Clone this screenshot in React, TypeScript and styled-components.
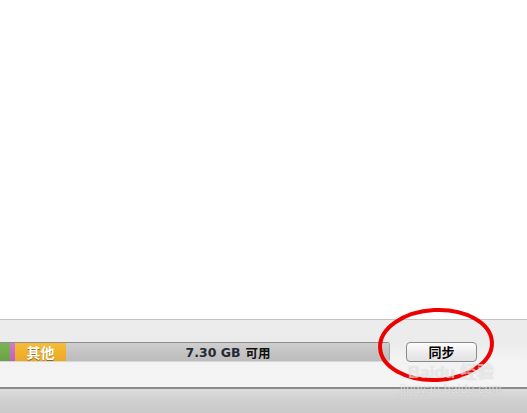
import React from 'react';
import styled, {createGlobalStyle} from 'styled-components';

const GlobalStyle = createGlobalStyle`
  html, body {
    margin: 0;
    padding: 0;
    background: #ffffff;
  }
  #root {
    width: 527px;
    height: 413px;
  }
`;

const segments = [
    {color: 'linear-gradient(#7cb356, #6aa243)', width: 10, label: ''},
    {color: 'linear-gradient(#d27ad0, #bf5fbd)', width: 5, label: ''},
    {color: 'linear-gradient(#f5bd38, #eca823)', width: 51, label: '其他'},
];

const App: React.FC = () => {
    return (
        <Window>
            <GlobalStyle/>
            <Content/>
            <Footer>
                <CapacityBar>
                    {segments.map((s, i) => (
                        <Segment key={i} $bg={s.color} style={{width: s.width}}>
                            {s.label}
                        </Segment>
                    ))}
                    <FreeSpace>
                        <FreeNumber>7.30 GB</FreeNumber>
                        <FreeLabel>可用</FreeLabel>
                    </FreeSpace>
                </CapacityBar>
                <SyncButton>同步</SyncButton>
            </Footer>
            <StatusBar/>
            <Highlight width="130" height="90" viewBox="0 0 130 90">
                <ellipse cx="65" cy="45" rx="56" ry="35" fill="none" stroke="#ee0000" strokeWidth="4"
                         transform="rotate(-3 65 45)"/>
            </Highlight>
            <Watermark>
                <WatermarkBrand>Baidu 经验</WatermarkBrand>
                <WatermarkUrl>jingyan.baidu.com</WatermarkUrl>
            </Watermark>
        </Window>
    );
};

const Window = styled.div`
  position: relative;
  width: 527px;
  height: 413px;
  display: flex;
  flex-direction: column;
  overflow: hidden;
  background: #ffffff;
`;

const Content = styled.div`
  flex: 1;
  background: #ffffff;
`;

const Footer = styled.div`
  height: 68px;
  flex: none;
  border-top: 1px solid #c3c3c3;
  background: linear-gradient(#ececec 0, #ececec 33%, #f3f3f3 60%, #f4f4f4 100%);
  display: flex;
  align-items: flex-start;
  padding-top: 22px;
  box-sizing: border-box;
`;

const CapacityBar = styled.div`
  width: 390px;
  height: 20px;
  display: flex;
  box-sizing: border-box;
  border-top: 1px solid #8e8e8e;
  border-bottom: 1px solid #d6d6d6;
  border-right: 1px solid #a8a8a8;
  border-radius: 0 3px 3px 0;
  overflow: hidden;
`;

const Segment = styled.div<{ $bg: string }>`
  flex: none;
  background: ${p => p.$bg};
  color: #ffffff;
  font: bold 14px "Noto Sans CJK SC", sans-serif;
  line-height: 18px;
  text-align: center;
  text-shadow: 0 1px 0 rgba(90, 60, 0, 0.6);
  box-sizing: border-box;
  &:last-of-type {
    border-right: 1px solid #8f8f8f;
  }
`;

const FreeSpace = styled.div`
  flex: 1;
  background: linear-gradient(#cfcfcf, #c2c2c2 60%, #bdbdbd);
  display: flex;
  justify-content: center;
  align-items: center;
  gap: 5px;
  padding-left: 1px;
`;

const FreeNumber = styled.span`
  font: bold 12.5px "DejaVu Sans", Verdana, sans-serif;
  color: #262a36;
`;

const FreeLabel = styled.span`
  font: bold 12.5px "Noto Sans CJK SC", sans-serif;
  color: #111111;
`;

const SyncButton = styled.button`
  margin-left: 16px;
  width: 71px;
  height: 20px;
  padding: 0;
  border: 1px solid #8a8a8a;
  border-radius: 4px;
  background: linear-gradient(#fdfdfd, #ececec 55%, #e2e2e2);
  font: bold 13px "Noto Sans CJK SC", sans-serif;
  color: #000000;
  line-height: 18px;
`;

const StatusBar = styled.div`
  height: 24px;
  flex: none;
  border-top: 2px solid #8a8a8a;
  background: linear-gradient(#dcdcdc, #cfcfcf 50%, #c9c9c9);
`;

const Highlight = styled.svg`
  position: absolute;
  left: 371px;
  top: 300px;
`;

const Watermark = styled.div`
  position: absolute;
  left: 400px;
  top: 364px;
  display: flex;
  flex-direction: column;
  align-items: center;
  pointer-events: none;
`;

const WatermarkBrand = styled.div`
  font: bold 17px "Liberation Sans", "Noto Sans CJK SC", sans-serif;
  color: rgba(255, 255, 255, 0.55);
  text-shadow: 0 0 1px rgba(120, 120, 120, 0.35);
  line-height: 18px;
`;

const WatermarkUrl = styled.div`
  font: 12px "Liberation Sans", sans-serif;
  color: rgba(255, 255, 255, 0.6);
  text-shadow: 0 0 1px rgba(110, 110, 110, 0.4);
  line-height: 14px;
  letter-spacing: 0.3px;
`;

export default App;
